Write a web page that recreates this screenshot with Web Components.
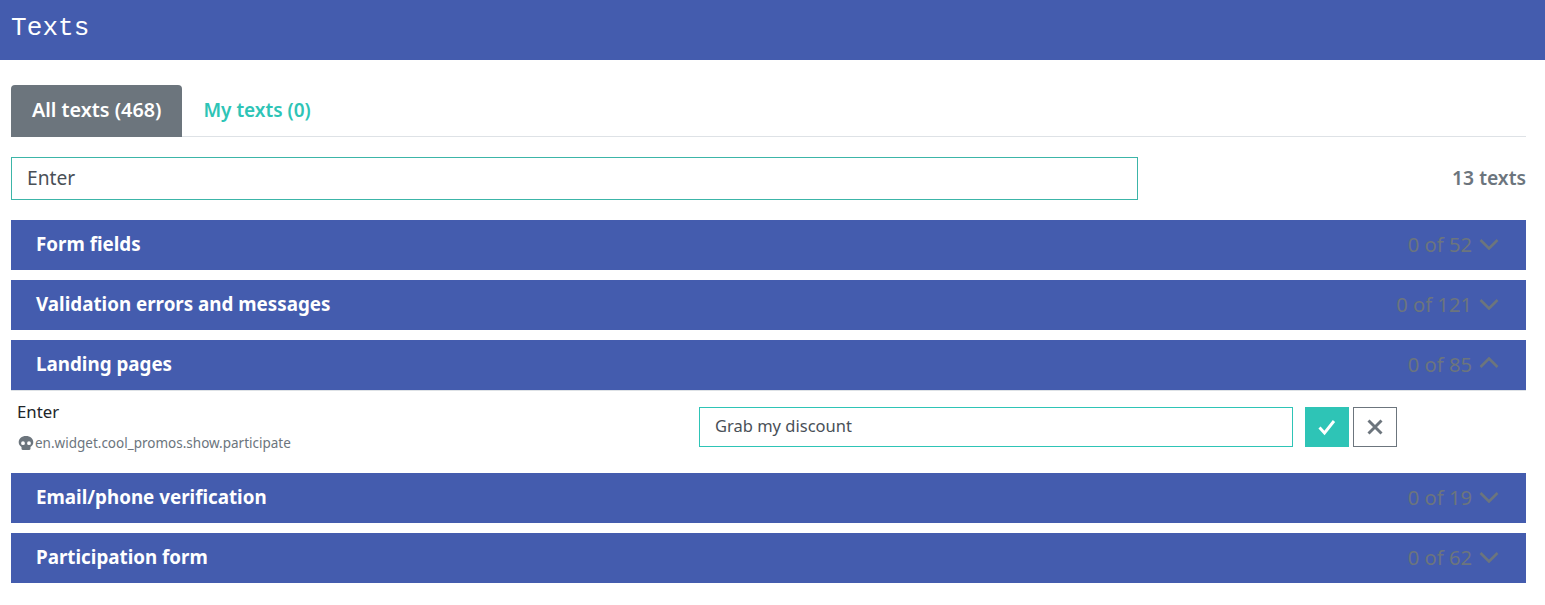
<!DOCTYPE html>
<html><head><meta charset="utf-8"><title>Texts</title>
<style>html,body{margin:0;padding:0;background:#fff}body{font-family:"Noto Sans",sans-serif}</style>
</head><body>
<template id="t-app"><style>
:host{display:block;color:#495057}
header{height:60px;background:#445cae;display:flex;align-items:center;padding:0 11px;box-sizing:border-box}
h1{margin:0;font:400 26px/30px "Liberation Mono",monospace;letter-spacing:.1px;color:#fff;position:relative;top:-2px}
main{padding:25px 19px 0 11px;display:flex;flex-direction:column}
.search{display:flex;justify-content:space-between;align-items:center;margin:20px 0}
.count{font:600 19.300px/24px "Noto Sans",sans-serif;color:#6c757d;position:relative;top:-1px}
.list{display:flex;flex-direction:column;gap:10px}
</style>
<header><h1>Texts</h1></header>
<main><slot name="tabs"></slot>
<div class="search"><slot name="search"></slot><span class="count">13 texts</span></div>
<div class="list"><slot></slot></div></main></template>

<template id="t-tabs"><style>
:host{display:flex;height:52px;border-bottom:1px solid #dee2e6;box-sizing:border-box}
</style><slot></slot></template>

<template id="t-tab"><style>
:host{display:flex;align-items:center;justify-content:center;height:52px;box-sizing:border-box;padding:0 21px 2px;font:600 19px/24px "Noto Sans",sans-serif;color:#2ec4b6;border-radius:4px 4px 0 0}
:host([active]){background:#6c757d;color:#fff;font-size:19.750px}
</style><slot></slot></template>

<template id="t-search"><style>
:host{display:flex;align-items:center;box-sizing:border-box;width:1127px;height:43px;border:1px solid #3cb5a8;padding:0 15px 2px;font:400 19.200px/24px "Noto Sans",sans-serif;color:#495057}
</style><slot></slot></template>

<template id="t-group"><style>
:host{display:block}
.bar{height:50px;background:#445cae;display:flex;align-items:center;justify-content:space-between;padding:0 27px 0 25px;box-sizing:border-box}
.name{font:700 18.800px/24px "Noto Sans",sans-serif;color:#fff;position:relative;top:-1px}
.right{display:flex;align-items:center;gap:7px;font:400 20.200px/24px "Noto Sans",sans-serif;color:#6c757d}
.right span{position:relative;top:-1px}
svg{width:20px;height:12px;display:block;fill:none;stroke:#6c757d;stroke-width:2.6;transform:translateY(-1px)}
:host([open]) svg{transform:scaleY(-1) translateY(2px)}
</style><div class="bar"><span class="name"><slot name="name"></slot></span><span class="right"><span><slot name="count"></slot></span><svg viewBox="0 0 20 12"><path d="M1.5 2 10 10.500 18.500 2"/></svg></span></div><slot></slot></template>

<template id="t-row"><style>
:host{display:flex;height:73px;box-sizing:border-box;padding:0 0 0 6px;align-items:flex-start;border-top:1px solid #dee2e6}
.info{width:682px;flex:none;display:flex;flex-direction:column}
.label{font:400 16.800px/20px "Noto Sans",sans-serif;color:#212529;margin-top:11px}
.key{display:flex;align-items:center;font:400 13.500px/18px "Noto Sans",sans-serif;color:#6c757d;margin-top:12px}
.key svg{width:17px;height:16px;flex:none;margin-right:1px;fill:#6c757d}
.edit{display:flex;gap:12px;margin-top:16px}
.input{width:594px;height:40px;box-sizing:border-box;border:1px solid #2ec4b6;display:flex;align-items:center;padding:0 15px 2px;font:400 16.500px/24px "Noto Sans",sans-serif;color:#495057}
.btns{display:flex;gap:4px}
.b{width:44px;height:40px;box-sizing:border-box;display:flex;align-items:center;justify-content:center}
.ok{background:#2ec4b6}.no{border:1px solid #6c757d;background:#fff}
.b svg{width:18px;height:18px;fill:none;stroke-width:2.900}
</style>
<div class="info"><span class="label"><slot name="label"></slot></span>
<span class="key"><svg viewBox="0 0 17 16"><path fill-rule="evenodd" d="M9 1c-4.300 0-7.300 2.700-7.300 6.200 0 2.100 1.100 3.700 2.800 4.700v1.900c0 .7.500 1.200 1.200 1.200h6.600c.7 0 1.200-.5 1.200-1.200v-1.900c1.700-1 2.800-2.600 2.800-4.700C16.300 3.700 13.300 1 9 1zM6 6.300a1.900 1.900 0 1 1 0 3.800 1.900 1.900 0 0 1 0-3.800zm6 0a1.900 1.900 0 1 1 0 3.800 1.900 1.900 0 0 1 0-3.800z"/></svg><slot name="key"></slot></span></div>
<div class="edit"><div class="input"><slot name="value"></slot></div><div class="btns">
<div class="b ok"><svg viewBox="0 0 18 18" stroke="#fff"><path d="M1.500 9.500 6.500 15 16 3"/></svg></div>
<div class="b no"><svg viewBox="0 0 18 18" stroke="#6c757d"><path d="M2.500 2.500 15.500 15.500M15.500 2.500 2.500 15.500"/></svg></div></div></div></template>

<x-app>
<x-tabs slot="tabs"><x-tab active>All texts (468)</x-tab><x-tab>My texts (0)</x-tab></x-tabs>
<x-search slot="search">Enter</x-search>
<x-group><span slot="name">Form fields</span><span slot="count">0 of 52</span></x-group>
<x-group><span slot="name">Validation errors and messages</span><span slot="count">0 of 121</span></x-group>
<x-group open><span slot="name">Landing pages</span><span slot="count">0 of 85</span>
<x-row><span slot="label">Enter</span><span slot="key">en.widget.cool_promos.show.participate</span><span slot="value">Grab my discount</span></x-row></x-group>
<x-group><span slot="name">Email/phone verification</span><span slot="count">0 of 19</span></x-group>
<x-group><span slot="name">Participation form</span><span slot="count">0 of 62</span></x-group>
</x-app>
<script>
for (const [tag,id] of [["x-app","t-app"],["x-tabs","t-tabs"],["x-tab","t-tab"],["x-search","t-search"],["x-group","t-group"],["x-row","t-row"]]) {
  customElements.define(tag, class extends HTMLElement {
    constructor(){super();this.attachShadow({mode:"open"}).appendChild(document.getElementById(id).content.cloneNode(true));}
  });
}
</script>
</body></html>
